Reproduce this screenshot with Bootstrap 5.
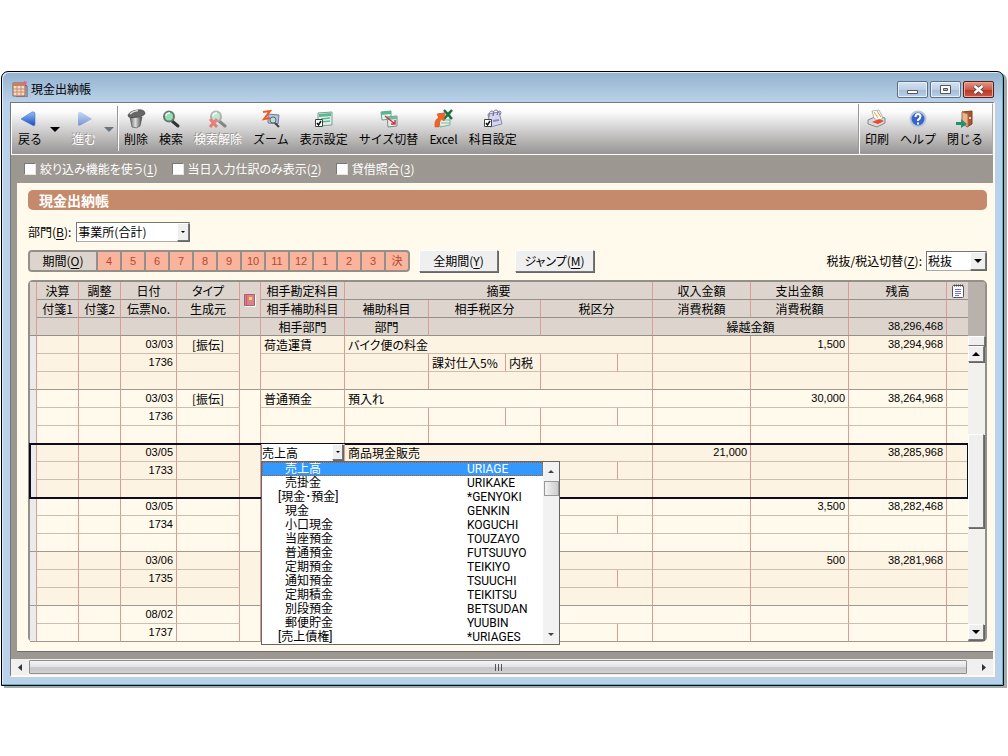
<!DOCTYPE html>
<html lang="ja">
<head>
<meta charset="utf-8">
<meta name="viewport" content="width=device-width, initial-scale=1">
<title>現金出納帳</title>
<link rel="stylesheet" href="https://cdn.jsdelivr.net/npm/bootstrap@5.3.0/dist/css/bootstrap.min.css">
<style>
body{background:#fff;color:#000;font:12px/18px "Noto Sans CJK JP",sans-serif;padding:71px 4px 69px 1px}
button,select,input{font:inherit;color:inherit}
button{padding:0;border:0;background:none}
svg{display:block}
u{text-underline-offset:2px}
/* window frame */
.win{border:1px solid #000;border-radius:7px 7px 0 0;box-shadow:3px 2px 0 #aaa7a7,inset -1px -1px 0 #35c3dc,inset 1px 1px 0 #dcebf8;background:linear-gradient(#93b2ce 0,#b9d1ea 30px);padding:0 8px 8px}
.titlebar{height:30px;padding:5px 1px 0 2px}
.titlebar h1{font-size:12px;line-height:18px;margin:3px 0 0 3px;font-weight:400}
.cap{width:31px;height:17px;border:1px solid #5d6f86;border-radius:2px;background:linear-gradient(#d5e2f1,#bccfe5 50%,#a4bbd6 50%,#b9d0e9);box-shadow:inset 0 0 0 1px #e6f0fa}
.cap.shut{background:linear-gradient(#e29a8a,#cd5a45 50%,#b53423 50%,#c95a45);border-color:#5a2018;box-shadow:inset 0 0 0 1px #e8a899}
.client{background:#9c9790;border:1px solid #777;border-right:2px solid #fffbe9;border-bottom:2px solid #fffbe9}
/* toolbar */
.tools{height:52px;border:1px solid #fff;border-right-color:#aaa;background:linear-gradient(#fff 0,#fbfbfb 8px,#9a9696 49px)}
.tool{display:flex;flex-direction:column;align-items:center;padding-top:5px;line-height:18px;white-space:nowrap}
.tool svg{width:20px;height:20px;margin-bottom:1px}
.tool:disabled{color:#fff;text-shadow:-1px -1px 0 #989491}
.tool:disabled svg{opacity:.5}
.more{align-self:flex-start;padding-top:23px}
.group-r{border-left:1px solid #fff;box-shadow:-1px 0 0 #999;padding:0 9px 0 5px}
.rule{width:1px;height:45px;margin-top:2px;background:#fff;box-shadow:-1px 0 0 #999}
.filters{height:28px;gap:14px;padding:0 0 0 13px;color:#fff;font-feature-settings:"palt"}
.filters input{appearance:none;width:12px;height:12px;margin:0;background:#fff;border:1px solid #777;border-right-color:#e8e4dc;border-bottom-color:#e8e4dc}
/* sheet */
.sheet{background:#fffaeb;margin-left:6px;padding:7px 6px 9px 11px;border-bottom:1px solid #716b78}
.banner{background:#c48a6b;color:#fff;font-size:14px;line-height:20px;font-weight:700;border-radius:5px;padding:0 11px;margin:0}
.palt{font-feature-settings:"palt"}
.combo{position:relative;display:flex;background:#fff}
.combo select{appearance:none;border:1px solid #777;border-right-color:#aaa;border-bottom-color:#aaa;background:#fff;width:100%;height:20px;line-height:16px;padding:0 18px 0 1px;border-radius:0}
.combo .drop{position:absolute;top:1px;right:1px;bottom:1px;width:12px;display:flex;align-items:center;justify-content:center;pointer-events:none}
.raised{background:#efefef;border:1px solid #fff;border-right-color:#777;border-bottom-color:#777;box-shadow:1px 1px 0 #666}
.w-dept{width:114px}.w-tax{width:61px}
.combo.w-tax .drop{width:16px}
.months{border:2px solid #93908a;border-radius:4px;background:#fab39c;color:#b04a34;height:22px;width:382px;overflow:hidden}
.months button{flex:1 1 0;border-left:2px solid #93908a;line-height:18px}
.months .period{flex:0 0 66px;border:0;background:#ddd5cd;color:#000;font:12px/18px "Noto Sans CJK JP",sans-serif}
.num{font-family:"Liberation Sans","Noto Sans CJK JP",sans-serif;font-size:11px}
.push{width:79px;height:22px;line-height:18px}
/* ledger */
.frame{border:2px solid #93908a;border-radius:5px;margin-top:8px;height:362px}
.ledger{table-layout:fixed;border-collapse:separate;border-spacing:0}
.ledger th,.ledger td{height:18px;line-height:17px;padding:0 3px;border-right:1px solid #dc9b94;border-bottom:1px solid #cdbfad;white-space:nowrap;overflow:hidden}
.ledger th{font-weight:400;text-align:center;background:#ddd5cd;border-bottom-color:#938f89;padding:0}
.ledger tr>:last-child{border-right:0}
.ledger th.num,.ledger td.num{text-align:right}
.ledger th.num{padding-right:3px}
.ledger td.grip{background:#ebebeb}
.ledger td.grip,.ledger td.ic,.ledger tr.last td{border-bottom-color:#9f9a90}
.ledger tbody{background:#fdf3e3}
.ledger tbody:nth-of-type(even){background:#fffaeb}
.ledger tbody.now{outline:2px solid #0c0c1c;outline-offset:-1px}
.ledger td.pick{padding:0;overflow:visible;position:relative}
.pick .combo select{height:17px;border-color:#fff #fff #fff #888;padding-left:0;line-height:15px}
.pick .combo .drop{top:0;bottom:1px;width:11px}
.menu{position:absolute;z-index:5;left:0;top:17px;width:299px;border:1px solid #666;background:#fff}
.menu ul{list-style:none;margin:0;padding:0;flex:1;font-family:Roboto,"Noto Sans CJK JP",sans-serif}
.menu li{display:flex;height:14px;line-height:14px;padding-left:23px}
.menu li span:first-child{width:182px}
.menu li.head{padding-left:16px}
.menu li.head span:first-child{width:189px}
.menu li.sel{background:#3399ff;color:#fff;outline:1px dotted #b45a14;outline-offset:-1px}
.mbar{width:16px;background:#f2f2f2}
.mbar i{display:block;height:15px;width:15px;margin-top:4px;border:1px solid #999;background:linear-gradient(90deg,#f4f4f4,#ccc)}
.vbar{width:17px;background:#f3f1ee}
.vbar .blank{height:54px;background:#b9b1ab}
.vbar .split{height:10px}
.vbar .arrow{height:16px;width:16px;display:flex;align-items:center;justify-content:center}
.vbar .thumb{height:94px;width:16px}
.hbar{height:16px;margin-top:7px;background:#f0f0f0}
.hbar button{width:18px;display:flex;align-items:center;justify-content:center}
.hthumb{border:1px solid #8f8f8f;border-radius:1px;background:linear-gradient(#f4f4f4,#e3e3e5 50%,#c6c6ca 55%,#d2d2d6);margin:1px 0}
</style>
</head>
<body>
<svg width="0" height="0" class="position-absolute" aria-hidden="true">
<defs>
<linearGradient id="bl" x1="0" y1="0" x2="0" y2="1"><stop offset="0" stop-color="#8fc0f8"/><stop offset="1" stop-color="#1c4bc0"/></linearGradient>
<linearGradient id="gy" x1="0" y1="0" x2="1" y2="0"><stop offset="0" stop-color="#666"/><stop offset=".45" stop-color="#ddd"/><stop offset="1" stop-color="#444"/></linearGradient>
<symbol id="lens" viewBox="0 0 20 20"><path d="M11 12l6 5" stroke="#333" stroke-width="3" stroke-linecap="round"/><circle cx="8" cy="7.500" r="5" fill="#8fe0b4" stroke="#687870" stroke-width="2"/><path d="M5 7q0-3 4-3" stroke="#fff" stroke-width="1.500" fill="none"/></symbol>
<symbol id="down" viewBox="0 0 10 5"><path d="M0 0h10L5 5z" fill="currentColor"/></symbol>
<symbol id="pad" viewBox="0 0 20 20"><path d="M4 4l14-1v13l-14 1z" fill="#dff0e8" stroke="#7c9c90"/><path d="M5 5l12-1v3l-12 1z" fill="#59b894"/><path d="M7 10l9-1M7 13l9-1" stroke="#65b696" stroke-width="1.500"/></symbol>
<symbol id="tick" viewBox="0 0 8 8"><path d="M.5.500h7v7h-7z" fill="#fff" stroke="#444"/><path d="M2 4l1.500 2L6 2" stroke="#111" stroke-width="1.500" fill="none"/></symbol>
</defs>
</svg>

<main class="win">
  <header class="titlebar d-flex align-items-start">
    <svg class="mt-1" width="16" height="16" viewBox="0 0 16 16"><path d="M1 2h12v13H1z" fill="#f6dcc4" stroke="#8b5c48"/><path d="M1 2h12v3H1z" fill="#c88060"/><path d="M1 8h12M1 11h12M5 5v10M9 5v10" stroke="#c98c70"/><path d="M13 4l2 1v11H4" fill="none" stroke="#77574d"/><path d="M12 0l3 1-1 3-3-1z" fill="#ee5c98"/></svg>
    <h1>現金出納帳</h1>
    <div class="ms-auto d-flex" style="gap:2px;margin-top:4px">
      <button class="cap" aria-label="最小化"><svg width="29" height="15" viewBox="0 0 29 15"><path d="M9.500 8.500h10v3h-10z" fill="#fff" stroke="#555"/></svg></button>
      <button class="cap" aria-label="最大化"><svg width="29" height="15" viewBox="0 0 29 15"><path d="M9.500 3.500h10v8h-10z" fill="#fff" stroke="#555"/><path d="M12.500 6.500h4v2h-4z" fill="#a9bfd8" stroke="#555"/></svg></button>
      <button class="cap shut" aria-label="閉じる"><svg width="29" height="15" viewBox="0 0 29 15"><path d="M10.500 4l8 7m0-7l-8 7" stroke="#444" stroke-width="4"/><path d="M10.500 4l8 7m0-7l-8 7" stroke="#fff" stroke-width="2.500"/></svg></button>
    </div>
  </header>

  <div class="client">
    <nav class="tools d-flex" aria-label="ツールバー">
      <div class="d-flex" style="padding:0 4px 0 6px">
        <button class="tool"><svg viewBox="0 0 20 20"><path d="M1 10L12 3q3-1 3 2v10q0 3-3 1z" fill="url(#bl)" stroke="#4a76c8" stroke-width=".6"/></svg>戻る</button>
        <button class="more ms-2" aria-label="戻る履歴"><svg width="10" height="5"><use href="#down"/></svg></button>
        <button class="tool ms-2 ps-1" disabled><svg viewBox="0 0 20 20"><path d="M18 10L7 3q-3-1-3 2v10q0 3 3 1z" fill="url(#bl)"/></svg>進む</button>
        <button class="more ms-2 text-secondary" aria-label="進む履歴" disabled><svg width="10" height="5"><use href="#down"/></svg></button>
      </div>
      <div class="rule"></div>
      <div class="d-flex" style="gap:11px;padding-left:5px">
        <button class="tool"><svg viewBox="0 0 20 20"><path d="M4 8l2 10q5 2 8-1l2-9z" fill="url(#gy)" stroke="#555" stroke-width=".7"/><path d="M2 6q2-4 9-5 7-1 8 3 0 3-8 4-9 2-9-2z" fill="#666" stroke="#444" stroke-width=".7"/><path d="M4 5q3-3 8-3.500" stroke="#ddd" fill="none" stroke-width="1.500"/></svg>削除</button>
        <button class="tool"><svg><use href="#lens"/></svg>検索</button>
        <button class="tool" disabled><svg viewBox="0 0 20 20"><use href="#lens"/><path d="M2 10l7 8M9 10l-7 8" stroke="#f02010" stroke-width="3"/></svg>検索解除</button>
        <button class="tool"><svg viewBox="0 0 20 20"><path d="M7 5l11 1-1 9-10-1z" fill="#b7bdde" stroke="#777ba0"/><path d="M14 14l4 4" stroke="#444" stroke-width="2"/><circle cx="12" cy="11" r="3" fill="#a9ead0" stroke="#667"/><path d="M2 3l7-1-6 8 6-1" stroke="#f05a20" stroke-width="2" fill="none"/></svg>ズーム</button>
        <button class="tool"><svg viewBox="0 0 20 20"><use href="#pad"/><use href="#tick" x="1" y="10" width="8" height="8"/></svg>表示設定</button>
        <button class="tool"><svg viewBox="0 0 20 20"><path d="M2 3l10-1v8L3 11z" fill="#e2f5ec" stroke="#6f9d8a"/><path d="M2 3l10-1v3L2 6z" fill="#55b892"/><path d="M8 8l10-1v10l-9 1z" fill="#dff0e8" stroke="#6f8f84"/><path d="M8 8l10-1v3L8 11z" fill="#6cbf9e"/><path d="M6 7l10 8m0-4v4h-4" stroke="#e02848" stroke-width="1.500" fill="none"/></svg>サイズ切替</button>
        <button class="tool"><svg viewBox="0 0 20 20"><path d="M4 5l12-2v13l-10 2z" fill="#e0f2e8" stroke="#84aa98"/><path d="M7 14h9M8 11h8" stroke="#80b89c"/><path d="M10 1l8 9M18 1l-8 9" stroke="#187040" stroke-width="2.500"/><path d="M1 18q-1-8 4-9L3 5l8-1-1 8-2-2q-3 2-3 8z" fill="#f26324" stroke="#c94c18" stroke-width=".5"/></svg>Excel</button>
        <button class="tool"><svg viewBox="0 0 20 20"><path d="M5 5l11-2 3 12-12 3z" fill="#d5d5f0" stroke="#8888b0"/><path d="M6 8q0-6 3-6t1 5M10 7q0-6 3-6t1 5M14 6q1-5 3-4t0 4" stroke="#777795" fill="none"/><path d="M10 12l6-1" stroke="#8d8db9" stroke-width="2"/><use href="#tick" x="1" y="10" width="8" height="8"/></svg>科目設定</button>
      </div>
      <div class="group-r d-flex ms-auto" style="gap:11px">
        <button class="tool"><svg viewBox="0 0 20 20"><path d="M1 11l9-4 8 2v5l-8 4-9-3z" fill="#d7d7dc" stroke="#888"/><path d="M7 9l-2-7 7-1 4 8-5 3z" fill="#fff" stroke="#999" stroke-width=".7"/><path d="M7 3l4 6M10 2l4 6" stroke="#e8953e"/><path d="M5 13l6 2 6-3-5-2z" fill="#e64c2c"/></svg>印刷</button>
        <button class="tool"><svg viewBox="0 0 20 20"><circle cx="10" cy="10" r="7.500" fill="#3865c8" stroke="#b9c5d9" stroke-width="2"/><path d="M7.500 8q0-3 2.500-3t2.500 2.500Q12.500 9 10 11v1M10 13.500v2" stroke="#fff" stroke-width="2" fill="none"/></svg>ヘルプ</button>
        <button class="tool"><svg viewBox="0 0 20 20"><path d="M7 3l10-1v13l-5 3-1-1V5z" fill="#a4572e" stroke="#7c4528"/><path d="M7 3l6 2v13l-6-3z" fill="#efb18a" stroke="#a96b48"/><path d="M1 13h5v-3l6 5-6 4v-3H1z" fill="#26906e"/><circle cx="15" cy="9" r="1" fill="#fff"/></svg>閉じる</button>
      </div>
    </nav>

    <div class="filters d-flex align-items-center">
      <label class="d-flex align-items-center gap-1"><input type="checkbox"><span>絞り込み機能を使う(<u>1</u>)</span></label>
      <label class="d-flex align-items-center gap-1"><input type="checkbox"><span>当日入力仕訳のみ表示(<u>2</u>)</span></label>
      <label class="d-flex align-items-center gap-1"><input type="checkbox"><span>貸借照合(<u>3</u>)</span></label>
    </div>

    <section class="sheet">
      <h2 class="banner">現金出納帳</h2>
      <div class="d-flex align-items-center" style="margin-top:12px;gap:5px">
        <label for="dept" class="palt">部門(<u>B</u>):</label>
        <div class="combo w-dept"><select id="dept"><option>事業所(合計)</option></select><span class="drop raised"><svg width="4" height="2"><use href="#down"/></svg></span></div>
      </div>
      <div class="d-flex align-items-center mt-2">
        <div class="months d-flex num">
          <button class="period">期間(<u>O</u>)</button>
          <button>4</button><button>5</button><button>6</button><button>7</button><button>8</button><button>9</button><button>10</button><button>11</button><button>12</button><button>1</button><button>2</button><button>3</button><button>決</button>
        </div>
        <button class="push raised palt" style="margin-left:9px">全期間(<u>Y</u>)</button>
        <button class="push raised palt" style="margin-left:17px">ジャンプ(<u>M</u>)</button>
        <label for="tax" class="palt ms-auto me-1">税抜/税込切替(<u>Z</u>):</label>
        <div class="combo w-tax"><select id="tax"><option>税抜</option></select><span class="drop raised"><svg width="8" height="4"><use href="#down"/></svg></span></div>
      </div>

      <div class="frame d-flex">
        <div class="flex-grow-1">
        <table class="ledger w-100">
          <colgroup><col style="width:7px"><col style="width:42px"><col style="width:42px"><col style="width:56px"><col style="width:63px"><col style="width:21px"><col style="width:84px"><col style="width:84px"><col style="width:77px"><col style="width:35px"><col style="width:77px"><col style="width:35px"><col style="width:98px"><col style="width:98px"><col style="width:98px"><col style="width:21px"></colgroup>
          <thead>
            <tr><th rowspan="3"></th><th>決算</th><th>調整</th><th>日付</th><th class="palt">タイプ</th>
              <th rowspan="2"><svg class="mx-auto" width="12" height="14" viewBox="0 0 12 14"><path d="M.5 1.500h10v11H.5z" fill="#e08088" stroke="#a8606c"/><path d="M2.500 1v11" stroke="#b8606c"/><path d="M5 4h3v3H5z" fill="#fbe06c"/><path d="M1 13.500h10.500V2" stroke="#fff" fill="none"/></svg></th>
              <th>相手勘定科目</th><th colspan="5">摘要</th><th>収入金額</th><th>支出金額</th><th>残高</th>
              <th><svg class="mx-auto" width="12" height="14" viewBox="0 0 12 14"><rect x=".5" y="1.500" width="11" height="12" rx="1" fill="#fff" stroke="#55556a"/><path d="M2 1.500h9" stroke="#444" stroke-width="2" stroke-dasharray="1 1"/><path d="M3 5.500h6M3 7.500h6M3 9.500h6M3 11.500h4" stroke="#7474d8"/></svg></th></tr>
            <tr><th>付箋1</th><th>付箋2</th><th>伝票No.</th><th>生成元</th><th>相手補助科目</th><th>補助科目</th><th colspan="2">相手税区分</th><th colspan="2">税区分</th><th>消費税額</th><th>消費税額</th><th></th><th></th></tr>
            <tr><th></th><th></th><th></th><th></th><th></th><th>相手部門</th><th>部門</th><th colspan="2"></th><th colspan="2"></th><th colspan="2">繰越金額</th><th class="num">38,296,468</th><th></th></tr>
          </thead>
          <tbody>
            <tr><td class="grip" rowspan="3"></td><td></td><td></td><td class="num">03/03</td><td class="text-center">[振伝]</td><td class="ic" rowspan="3"></td><td>荷造運賃</td><td colspan="5" class="palt">バイク便の料金</td><td class="num"></td><td class="num">1,500</td><td class="num">38,294,968</td><td></td></tr>
            <tr><td></td><td></td><td class="num">1736</td><td></td><td></td><td></td><td>課対仕入5%</td><td>内税</td><td></td><td></td><td></td><td></td><td></td><td></td></tr>
            <tr class="last"><td></td><td></td><td></td><td></td><td></td><td></td><td colspan="2"></td><td colspan="2"></td><td></td><td></td><td></td><td></td></tr>
          </tbody>
          <tbody>
            <tr><td class="grip" rowspan="3"></td><td></td><td></td><td class="num">03/03</td><td class="text-center">[振伝]</td><td class="ic" rowspan="3"></td><td>普通預金</td><td colspan="5">預入れ</td><td class="num"></td><td class="num">30,000</td><td class="num">38,264,968</td><td></td></tr>
            <tr><td></td><td></td><td class="num">1736</td><td></td><td></td><td></td><td></td><td></td><td></td><td></td><td></td><td></td><td></td><td></td></tr>
            <tr class="last"><td></td><td></td><td></td><td></td><td></td><td></td><td colspan="2"></td><td colspan="2"></td><td></td><td></td><td></td><td></td></tr>
          </tbody>
          <tbody class="now">
            <tr><td class="grip" rowspan="3"></td><td></td><td></td><td class="num">03/05</td><td></td><td class="ic" rowspan="3"></td>
              <td class="pick">
                <div class="combo"><select aria-label="相手勘定科目"><option>売上高</option></select><span class="drop raised"><svg width="4" height="2"><use href="#down"/></svg></span></div>
                <div class="menu d-flex">
                  <ul role="listbox" aria-label="科目一覧">
                    <li class="sel" role="option" aria-selected="true"><span>売上高</span><span>URIAGE</span></li>
                    <li role="option"><span>売掛金</span><span>URIKAKE</span></li>
                    <li role="option" class="head"><span>[現金･預金]</span><span>*GENYOKI</span></li>
                    <li role="option"><span>現金</span><span>GENKIN</span></li>
                    <li role="option"><span>小口現金</span><span>KOGUCHI</span></li>
                    <li role="option"><span>当座預金</span><span>TOUZAYO</span></li>
                    <li role="option"><span>普通預金</span><span>FUTSUUYO</span></li>
                    <li role="option"><span>定期預金</span><span>TEIKIYO</span></li>
                    <li role="option"><span>通知預金</span><span>TSUUCHI</span></li>
                    <li role="option"><span>定期積金</span><span>TEIKITSU</span></li>
                    <li role="option"><span>別段預金</span><span>BETSUDAN</span></li>
                    <li role="option"><span>郵便貯金</span><span>YUUBIN</span></li>
                    <li role="option" class="head"><span>[売上債権]</span><span>*URIAGES</span></li>
                  </ul>
                  <div class="mbar d-flex flex-column align-items-center py-2"><svg width="6" height="3" viewBox="0 0 6 3"><path d="M0 3h6L3 0z" fill="#444"/></svg><i class="mt-2"></i><svg class="mt-auto" width="6" height="3"><use href="#down" color="#444"/></svg></div>
                </div>
              </td>
              <td colspan="5">商品現金販売</td><td class="num">21,000</td><td></td><td class="num">38,285,968</td><td></td></tr>
            <tr><td></td><td></td><td class="num">1733</td><td></td><td></td><td></td><td></td><td></td><td></td><td></td><td></td><td></td><td></td><td></td></tr>
            <tr class="last"><td></td><td></td><td></td><td></td><td></td><td></td><td colspan="2"></td><td colspan="2"></td><td></td><td></td><td></td><td></td></tr>
          </tbody>
          <tbody>
            <tr><td class="grip" rowspan="3"></td><td></td><td></td><td class="num">03/05</td><td></td><td class="ic" rowspan="3"></td><td></td><td colspan="5"></td><td></td><td class="num">3,500</td><td class="num">38,282,468</td><td></td></tr>
            <tr><td></td><td></td><td class="num">1734</td><td></td><td></td><td></td><td></td><td></td><td></td><td></td><td></td><td></td><td></td><td></td></tr>
            <tr class="last"><td></td><td></td><td></td><td></td><td></td><td></td><td colspan="2"></td><td colspan="2"></td><td></td><td></td><td></td><td></td></tr>
          </tbody>
          <tbody>
            <tr><td class="grip" rowspan="3"></td><td></td><td></td><td class="num">03/06</td><td></td><td class="ic" rowspan="3"></td><td></td><td colspan="5"></td><td></td><td class="num">500</td><td class="num">38,281,968</td><td></td></tr>
            <tr><td></td><td></td><td class="num">1735</td><td></td><td></td><td></td><td></td><td></td><td></td><td></td><td></td><td></td><td></td><td></td></tr>
            <tr class="last"><td></td><td></td><td></td><td></td><td></td><td></td><td colspan="2"></td><td colspan="2"></td><td></td><td></td><td></td><td></td></tr>
          </tbody>
          <tbody>
            <tr><td class="grip" rowspan="2"></td><td></td><td></td><td class="num">08/02</td><td></td><td class="ic" rowspan="2"></td><td></td><td colspan="5"></td><td></td><td></td><td></td><td></td></tr>
            <tr class="last"><td></td><td></td><td class="num">1737</td><td></td><td></td><td></td><td></td><td></td><td></td><td></td><td></td><td></td><td></td><td></td></tr>
          </tbody>
        </table>
        </div>
        <div class="vbar d-flex flex-column flex-shrink-0">
          <div class="blank"></div>
          <div class="split raised"></div>
          <button class="arrow raised" aria-label="上へ"><svg width="8" height="4" viewBox="0 0 8 4"><path d="M0 4h8L4 0z"/></svg></button>
          <div style="flex:72 0 0"></div>
          <div class="thumb raised"></div>
          <div style="flex:96 0 0"></div>
          <button class="arrow raised" aria-label="下へ"><svg width="8" height="4"><use href="#down"/></svg></button>
        </div>
      </div>
    </section>

    <div class="hbar d-flex">
      <button aria-label="左へ"><svg width="4" height="7" viewBox="0 0 4 7"><path d="M4 0v7L0 3.500z" fill="#333"/></svg></button>
      <div class="hthumb flex-grow-1 d-flex align-items-center justify-content-center"><svg width="9" height="7" viewBox="0 0 9 7"><path d="M1.500 0v7M4.500 0v7M7.500 0v7" stroke="#555"/></svg></div>
      <button class="ms-2" aria-label="右へ"><svg width="4" height="7" viewBox="0 0 4 7"><path d="M0 0v7l4-3.500z" fill="#333"/></svg></button>
    </div>
  </div>
</main>
<script src="https://cdn.jsdelivr.net/npm/bootstrap@5.3.0/dist/js/bootstrap.bundle.min.js"></script>
</body>
</html>
